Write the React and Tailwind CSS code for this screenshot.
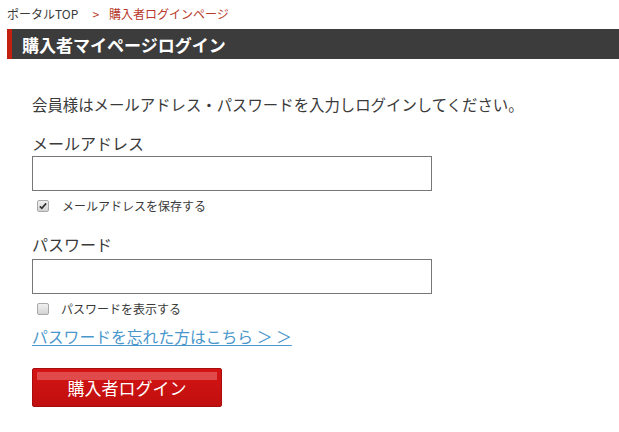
import { useState } from "react";

const font = { fontFamily: '"Noto Sans CJK JP", "Noto Sans", sans-serif' };

const Check = ({ checked, onClick }) => (
  <span
    onClick={onClick}
    className="flex h-[12px] w-[12px] shrink-0 items-center justify-center rounded-[2px] border border-[#a9a9a9] bg-gradient-to-b from-[#f0f0f0] to-[#d4d4d4]"
  >
    {checked && (
      <svg viewBox="0 0 12 12" className="h-[10px] w-[10px]">
        <path d="M2.2 6.4 L4.6 8.8 L9.8 2.8" fill="none" stroke="#333" strokeWidth="2" />
      </svg>
    )}
  </span>
);

export default function App() {
  const [saveMail, setSaveMail] = useState(true);
  const [showPass, setShowPass] = useState(false);

  return (
    <div className="min-h-[432px] w-[619px] bg-white text-[#3a3a3a]" style={font}>
      {/* パンくず */}
      <div className="flex h-[29px] items-center pl-[7px] pb-[1px] text-[12px] leading-none">
        <span>ポータルTOP</span>
        <span className="ml-[14px] mr-[10px] text-[#b8382a]">&gt;</span>
        <span className="text-[#b8382a]">購入者ログインページ</span>
      </div>

      {/* 見出し */}
      <h1 className="ml-[7px] flex h-[30px] items-center border-l-[5px] border-[#c4200f] bg-[#3c3c3c] pl-[10px] text-[17px] font-bold leading-none text-white">
        購入者マイページログイン
      </h1>

      <div className="pl-[32px] pt-[38px]">
        <p className="text-[15.4px] leading-none">会員様はメールアドレス・パスワードを入力しログインしてください。</p>

        <label className="mt-[23px] block text-[16px] leading-none">メールアドレス</label>
        <input
          type="text"
          className="mt-[5px] block h-[35px] w-[400px] border border-[#777] bg-white px-2 outline-none"
        />
        <div className="mt-[9px] flex items-center pl-[5px] text-[12px] leading-none">
          <Check checked={saveMail} onClick={() => setSaveMail(!saveMail)} />
          <span className="ml-[13px]">メールアドレスを保存する</span>
        </div>

        <label className="mt-[24px] block text-[16px] leading-none">パスワード</label>
        <input
          type={showPass ? "text" : "password"}
          className="mt-[7px] block h-[35px] w-[400px] border border-[#777] bg-white px-2 outline-none"
        />
        <div className="mt-[9px] flex items-center pl-[5px] text-[12px] leading-none">
          <Check checked={showPass} onClick={() => setShowPass(!showPass)} />
          <span className="ml-[12px]">パスワードを表示する</span>
        </div>

        <a href="#" className="mt-[14px] block text-[15.8px] leading-none text-[#4a97cc] underline underline-offset-2">
          パスワードを忘れた方はこちら ＞ ＞
        </a>

        {/* ログインボタン */}
        <button className="relative mt-[23px] flex h-[39px] w-[190px] items-center justify-center overflow-hidden rounded-[2px] border border-[#a80c0c] bg-gradient-to-b from-[#d41414] to-[#c10f0f] text-[17px] leading-none text-white">
          <span className="absolute left-[4px] right-[4px] top-[3px] h-[8px] bg-[#e04a4a]" />
          <span className="relative">購入者ログイン</span>
        </button>
      </div>
    </div>
  );
}
